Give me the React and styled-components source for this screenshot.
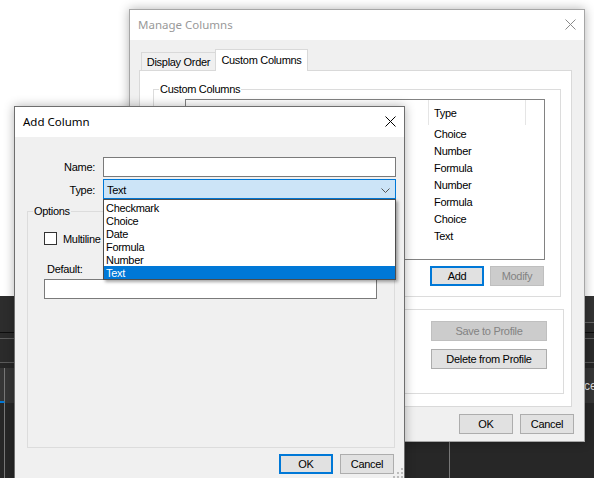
import React from 'react';
import styled, { createGlobalStyle } from 'styled-components';

const Global = createGlobalStyle`
  html, body { margin: 0; padding: 0; }
  body {
    width: 594px; height: 478px; overflow: hidden;
    font-family: "Liberation Sans", Arial, sans-serif;
  }
`;

const Desktop = styled.div`
  position: relative;
  width: 594px;
  height: 478px;
  overflow: hidden;
  display: flex;
  flex-direction: column;
  background: #fff;
  font-family: "Liberation Sans", Arial, sans-serif;
  font-size: 11px;
`;

/* ---------- background application ---------- */
const WhiteArea = styled.div`
  flex: none;
  height: 296px;
  background: #fff;
`;

const DarkApp = styled.div`
  flex: 1;
  display: flex;
  flex-direction: column;
  background: #2b2b2b;
`;

const TopBand = styled.div`
  flex: none;
  height: 36px;
  background: #2d2d2d;
  border-bottom: 1px solid #0e0e0e;
  display: flex;
  justify-content: flex-end;
  align-items: flex-start;
`;

const TopStrip = styled.div`
  width: 200px;
  height: 26px;
  background: #333;
  border-bottom: 1px solid #666;
`;

const SubBand = styled.div`
  flex: none;
  height: 30px;
  box-sizing: border-box;
  padding-top: 5px;
  border-bottom: 1px solid #5a5a5a;
`;

const SubLine = styled.div`
  border-top: 1px solid #5c5c5c;
`;

const Spacer = styled.div`
  flex: none;
  height: 5px;
  background: #262626;
`;

const DarkRow = styled.div`
  flex: ${p => (p.$fill ? 1 : 'none')};
  height: ${p => (p.$fill ? 'auto' : '35px')};
  display: grid;
  grid-template-columns: 5px ${p => (p.$fill ? '445px 1fr' : '1fr 10px')};
  background: ${p => (p.$fill ? '#272727' : '#363636')};
`;

const DarkCell = styled.div`
  border-right: ${p => (p.$line ? '1px solid #777' : 'none')};
  border-bottom: ${p => (p.$mark ? '2px solid #0078d7' : 'none')};
  color: #dcdcdc;
  display: flex;
  align-items: center;
  white-space: nowrap;
  font-size: 12px;
`;

/* ---------- windows ---------- */
const Window = styled.div`
  position: absolute;
  left: ${p => p.$x}px;
  top: ${p => p.$y}px;
  width: ${p => p.$w}px;
  height: ${p => p.$h}px;
  box-sizing: border-box;
  border: 1px solid ${p => (p.$active ? '#6e6e6e' : '#a6a6a6')};
  background: #f0f0f0;
  box-shadow: 0 0 10px rgba(0, 0, 0, 0.3);
  display: flex;
  flex-direction: column;
  font-family: "Liberation Sans", Arial, sans-serif;
  font-size: 11px;
  line-height: 13px;
  letter-spacing: -0.3px;
  color: #000;
`;

const TitleBar = styled.div`
  flex: none;
  box-sizing: border-box;
  height: 30px;
  padding-bottom: 1px;
  background: #fff;
  display: flex;
  align-items: center;
  justify-content: space-between;
  padding-left: 8px;
  font-family: "Noto Sans", "Liberation Sans", sans-serif;
  font-size: 11.5px;
  letter-spacing: 0;
  color: ${p => (p.$active ? '#000' : '#999')};
`;

const CloseBox = styled.div`
  width: 28px;
  height: 29px;
  display: flex;
  align-items: center;
  justify-content: center;
`;

const CloseIcon = ({ color }) => (
  <svg width="11" height="11" viewBox="0 0 11 11">
    <path d="M0.5 0.5 L10.5 10.5 M10.5 0.5 L0.5 10.5" stroke={color} strokeWidth="1" />
  </svg>
);

const ManageBody = styled.div`
  flex: 1;
  display: flex;
  flex-direction: column;
  padding: 9px 12px 0 9px;
`;

const TabRow = styled.div`
  height: 21px;
  display: flex;
  align-items: flex-end;
  padding-left: 2px;
`;

const Tab = styled.div`
  box-sizing: border-box;
  width: ${p => p.$w}px;
  height: ${p => (p.$selected ? 22 : 18)}px;
  margin-bottom: ${p => (p.$selected ? -1 : 0)}px;
  margin-left: ${p => (p.$selected ? -1 : 0)}px;
  border: 1px solid #d9d9d9;
  border-bottom: none;
  background: ${p => (p.$selected ? '#fff' : '#f0f0f0')};
  position: relative;
  z-index: ${p => (p.$selected ? 1 : 0)};
  display: flex;
  align-items: center;
  justify-content: center;
  padding-top: ${p => (p.$selected ? 0 : 2)}px;
  padding-bottom: ${p => (p.$selected ? 1 : 0)}px;
`;

const TabPanel = styled.div`
  box-sizing: border-box;
  height: 337px;
  border: 1px solid #d9d9d9;
  background: #fff;
  display: flex;
  flex-direction: column;
  padding: 12px 0 0 13px;
`;

const Group = styled.fieldset`
  margin: ${p => p.$mt || 0}px 0 0 ${p => p.$ml || 0}px;
  padding: 0;
  min-width: 0;
  box-sizing: border-box;
  width: ${p => p.$w}px;
  height: ${p => p.$h}px;
  border: 1px solid #dcdcdc;
  display: flex;
  flex-direction: column;
`;

const Legend = styled.legend`
  margin-left: 5px;
  padding: 0 1px;
  line-height: 13px;
`;

const ListView = styled.div`
  margin: 3px 0 0 31px;
  width: 360px;
  height: 161px;
  box-sizing: border-box;
  border: 1px solid #828282;
  background: #fff;
  display: grid;
  grid-template-columns: 243px 97px 1fr;
  grid-auto-rows: 17px;
  grid-template-rows: 25px;
  align-content: start;
`;

const HeaderCell = styled.div`
  border-right: ${p => (p.$last ? 'none' : '1px solid #e5e5e5')};
  padding: 2px 0 0 5px;
  display: flex;
  align-items: center;
`;

const Cell = styled.div`
  padding: 2px 0 0 5px;
  display: flex;
  align-items: center;
`;

const ButtonRow = styled.div`
  display: flex;
  justify-content: flex-end;
  gap: ${p => p.$gap || 6}px;
  margin: ${p => p.$m || '0'};
  width: ${p => (p.$w ? `${p.$w}px` : 'auto')};
  padding-right: ${p => p.$pr || 0}px;
  box-sizing: border-box;
`;

const ButtonColumn = styled.div`
  display: flex;
  flex-direction: column;
  align-items: flex-end;
  gap: 8px;
  padding: 11px 16px 0 0;
`;

const Button = styled.button`
  box-sizing: border-box;
  width: ${p => p.$w || 54}px;
  height: 20px;
  margin: 0;
  padding: 1px 0 0;
  font: inherit;
  letter-spacing: inherit;
  color: ${p => (p.disabled ? '#838383' : '#000')};
  background: ${p => (p.disabled ? '#cccccc' : '#e1e1e1')};
  border: ${p =>
    p.$default ? '2px solid #0078d7' : `1px solid ${p.disabled ? '#bfbfbf' : '#adadad'}`};
  display: flex;
  align-items: center;
  justify-content: center;
`;

/* ---------- add column dialog ---------- */
const AddBody = styled.div`
  flex: 1;
  display: flex;
  flex-direction: column;
  padding-top: 20px;
  position: relative;
`;

const FormGrid = styled.div`
  display: grid;
  grid-template-columns: 80px 293px;
  grid-auto-rows: 20px;
  column-gap: 8px;
  row-gap: 2px;
`;

const FieldLabel = styled.div`
  text-align: right;
  align-self: center;
  padding-top: ${p => (p.$down ? 2 : 0)}px;
`;

const TextBox = styled.div`
  box-sizing: border-box;
  border: 1px solid #7a7a7a;
  background: #fff;
  height: 20px;
  width: ${p => (p.$w ? `${p.$w}px` : 'auto')};
  margin: ${p => p.$m || '0'};
`;

const Combo = styled.div`
  position: relative;
  box-sizing: border-box;
  border: 1px solid #0078d7;
  background: #cce4f7;
  display: flex;
  align-items: center;
  justify-content: space-between;
  padding: 2px 5px 0 3px;
`;

const DropList = styled.div`
  position: absolute;
  top: calc(100% + 1px);
  left: -1px;
  right: -1px;
  z-index: 5;
  box-sizing: border-box;
  border: 1px solid #4d4d4d;
  background: #fff;
  padding-top: 1px;
  box-shadow: 2px 2px 3px rgba(0, 0, 0, 0.35);
`;

const DropItem = styled.div`
  height: 13px;
  line-height: 15px;
  padding-left: 2px;
  background: ${p => (p.$selected ? '#0078d7' : 'transparent')};
  color: ${p => (p.$selected ? '#fff' : '#000')};
`;

const CheckRow = styled.div`
  display: flex;
  align-items: center;
  gap: 6px;
  margin: 13px 0 0 16px;
`;

const CheckBox = styled.div`
  box-sizing: border-box;
  width: 13px;
  height: 13px;
  border: 1px solid #333;
  background: #fff;
`;

const CheckText = styled.span`
  padding-top: 2px;
`;

const PlainLabel = styled.div`
  margin: ${p => p.$m || '0'};
`;

const Grip = styled.div`
  position: absolute;
  right: 0;
  bottom: 0;
  width: 11px;
  height: 11px;
  display: flex;
`;

const GripIcon = () => (
  <svg width="11" height="11" viewBox="0 0 11 11">
    {[
      [8, 0],
      [8, 4],
      [4, 4],
      [8, 8],
      [4, 8],
      [0, 8],
    ].map(([x, y]) => (
      <rect key={`${x}-${y}`} x={x} y={y} width="2" height="2" fill="#bcbcbc" />
    ))}
  </svg>
);

const Chevron = () => (
  <svg width="9" height="5" viewBox="0 0 9 5">
    <polyline points="0.5,0.5 4.5,4.5 8.5,0.5" fill="none" stroke="#555" strokeWidth="1" />
  </svg>
);

const types = ['Choice', 'Number', 'Formula', 'Number', 'Formula', 'Choice', 'Text'];
const options = ['Checkmark', 'Choice', 'Date', 'Formula', 'Number', 'Text'];

export default function App() {
  return (
    <>
      <Global />
      <Desktop>
        <WhiteArea />
        <DarkApp>
          <TopBand>
            <TopStrip />
          </TopBand>
          <SubBand>
            <SubLine />
          </SubBand>
          <Spacer />
          <DarkRow>
            <DarkCell $line $mark />
            <DarkCell />
            <DarkCell>ce</DarkCell>
          </DarkRow>
          <DarkRow $fill>
            <DarkCell $line />
            <DarkCell $line />
            <DarkCell />
          </DarkRow>
        </DarkApp>

        <Window $x={129} $y={9} $w={456} $h={433}>
          <TitleBar>
            <span>Manage Columns</span>
            <CloseBox>
              <CloseIcon color="#8a8a8a" />
            </CloseBox>
          </TitleBar>
          <ManageBody>
            <TabRow>
              <Tab $w={75}>Display Order</Tab>
              <Tab $w={93} $selected>
                Custom Columns
              </Tab>
            </TabRow>
            <TabPanel>
              <Group $w={408} $h={214}>
                <Legend>Custom Columns</Legend>
                <ListView>
                  <HeaderCell />
                  <HeaderCell>Type</HeaderCell>
                  <HeaderCell $last />
                  {types.map((t, i) => (
                    <React.Fragment key={i}>
                      <Cell />
                      <Cell>{t}</Cell>
                      <Cell />
                    </React.Fragment>
                  ))}
                </ListView>
                <ButtonRow $m="6px 0 0 31px" $w={360} $pr={1}>
                  <Button $default>Add</Button>
                  <Button disabled>Modify</Button>
                </ButtonRow>
              </Group>
              <Group $w={411} $h={85} $mt={12}>
                <ButtonColumn>
                  <Button $w={116} disabled>
                    Save to Profile
                  </Button>
                  <Button $w={116}>Delete from Profile</Button>
                </ButtonColumn>
              </Group>
            </TabPanel>
            <ButtonRow $m="7px -2px 0 0" $gap={7}>
              <Button>OK</Button>
              <Button>Cancel</Button>
            </ButtonRow>
          </ManageBody>
        </Window>

        <Window $x={14} $y={106} $w={391} $h={374} $active>
          <TitleBar $active>
            <span>Add Column</span>
            <CloseBox>
              <CloseIcon color="#000" />
            </CloseBox>
          </TitleBar>
          <AddBody>
            <FormGrid>
              <FieldLabel>Name:</FieldLabel>
              <TextBox />
              <FieldLabel $down>Type:</FieldLabel>
              <Combo>
                <span>Text</span>
                <Chevron />
                <DropList>
                  {options.map(o => (
                    <DropItem key={o} $selected={o === 'Text'}>
                      {o}
                    </DropItem>
                  ))}
                </DropList>
              </Combo>
            </FormGrid>
            <Group $w={368} $h={243} $mt={6} $ml={12}>
              <Legend>Options</Legend>
              <CheckRow>
                <CheckBox />
                <CheckText>Multiline</CheckText>
              </CheckRow>
              <PlainLabel $m="17px 0 0 19px">Default:</PlainLabel>
              <TextBox $w={333} $m="3px 0 0 16px" />
            </Group>
            <ButtonRow $m="6px 0 0 0" $gap={7} $pr={10}>
              <Button $default>OK</Button>
              <Button>Cancel</Button>
            </ButtonRow>
            <Grip>
              <GripIcon />
            </Grip>
          </AddBody>
        </Window>
      </Desktop>
    </>
  );
}
